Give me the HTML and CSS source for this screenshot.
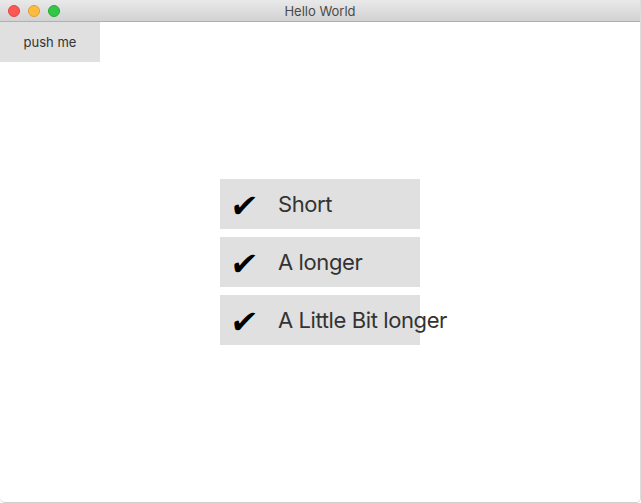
FILE: index.html
```html
<!DOCTYPE html>
<html>
<head>
<meta charset="utf-8">
<link rel="stylesheet" href="styles.css">
</head>
<body>
<div class="window">
  <div class="titlebar">
    <div class="lights">
      <span class="light red"></span>
      <span class="light yellow"></span>
      <span class="light green"></span>
    </div>
    <div class="title">Hello World</div>
  </div>
  <div class="content">
    <div class="list">
      <div class="row"><span class="check">✔</span><span class="label">Short</span></div>
      <div class="row"><span class="check">✔</span><span class="label">A longer</span></div>
      <div class="row"><span class="check">✔</span><span class="label">A Little Bit longer</span></div>
    </div>
    <div class="topbar"><button class="push">push me</button></div>
  </div>
</div>
</body>
</html>
```
FILE: styles.css
```css
html, body {
  margin: 0;
  padding: 0;
  background: #ffffff;
}
.window {
  width: 640px;
  height: 502px;
  display: flex;
  flex-direction: column;
  border-right: 1px solid #dcdcdc;
  border-bottom: 1px solid #cfcfcf;
  border-radius: 0 0 5px 5px;
  overflow: hidden;
  font-family: "Inter", "Liberation Sans", sans-serif;
}
.titlebar {
  height: 21px;
  flex: none;
  background: linear-gradient(#e9e9e9, #d2d2d2);
  border-bottom: 1px solid #b0b0b0;
  display: grid;
  align-items: center;
}
.lights {
  grid-area: 1 / 1;
  display: flex;
  gap: 8px;
  padding-left: 8px;
}
.light {
  width: 12px;
  height: 12px;
  border-radius: 50%;
  box-sizing: border-box;
}
.red { background: #fc5753; border: 1px solid #df4744; }
.yellow { background: #fdbc40; border: 1px solid #de9f34; }
.green { background: #33c748; border: 1px solid #27aa35; }
.title {
  grid-area: 1 / 1;
  text-align: center;
  font-size: 13px;
  color: #4a4a4a;
}
.content {
  flex: 1;
  display: grid;
}
.topbar {
  grid-area: 1 / 1;
  align-self: start;
  justify-self: start;
}
.push {
  width: 100px;
  height: 40px;
  margin: 0;
  border: none;
  background: #e0e0e0;
  font-family: "Inter", "Liberation Sans", sans-serif;
  font-size: 13px;
  color: #333;
  padding: 0;
}
.list {
  grid-area: 1 / 1;
  align-self: center;
  justify-self: center;
  display: flex;
  flex-direction: column;
  gap: 8px;
}
.row {
  width: 200px;
  height: 50px;
  background: #e0e0e0;
  display: flex;
  align-items: center;
  white-space: nowrap;
}
.check {
  flex: none;
  width: 58px;
  padding-left: 11px;
  padding-top: 4px;
  box-sizing: border-box;
  font-family: "DejaVu Sans", sans-serif;
  font-size: 32px;
  color: #000;
  line-height: 1;
  transform: skewX(-8deg);
}
.label {
  flex: none;
  font-size: 22px;
  color: #333;
  letter-spacing: -0.4px;
}
```
